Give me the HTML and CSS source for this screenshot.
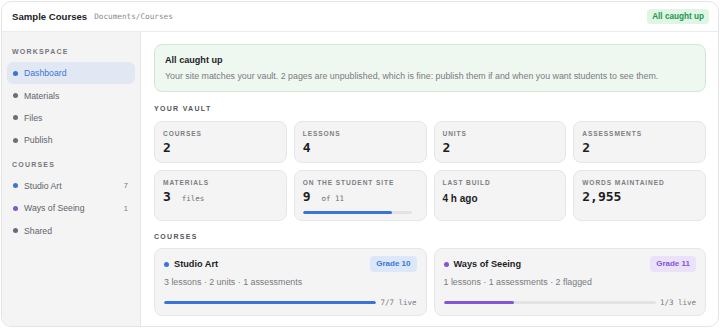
FILE: index.html
```html
<!DOCTYPE html>
<html lang="en">
<head>
    <meta charset="UTF-8">
    <meta name="viewport" content="width=device-width, initial-scale=1.0">
    <title>Sample Courses</title>
    <link rel="stylesheet" href="styles.css">
</head>
<body>
    <div class="app">
        <div class="topbar">
            <div class="brand">Sample Courses</div>
            <div class="path">Documents/Courses</div>
            <div class="status-pill">All caught up</div>
        </div>
        <div class="layout">
            <div class="sidebar">
                <div class="side-title">Workspace</div>
                <div class="nav-item active"><span class="dot blue"></span>Dashboard</div>
                <div class="nav-item"><span class="dot"></span>Materials</div>
                <div class="nav-item"><span class="dot"></span>Files</div>
                <div class="nav-item"><span class="dot"></span>Publish</div>
                <div class="side-title">Courses</div>
                <div class="nav-item"><span class="dot blue"></span>Studio Art<span class="count">7</span></div>
                <div class="nav-item"><span class="dot purple"></span>Ways of Seeing<span class="count">1</span></div>
                <div class="nav-item"><span class="dot slate"></span>Shared</div>
            </div>
            <div class="main">
                <div class="notice">
                    <div class="notice-title">All caught up</div>
                    <div class="notice-text">Your site matches your vault. 2 pages are unpublished, which is fine: publish them if and when you want students to see them.</div>
                </div>

                <div class="section-title">Your vault</div>
                <div class="stats">
                    <div class="stat">
                        <div class="stat-label">Courses</div>
                        <div class="stat-value">2</div>
                    </div>
                    <div class="stat">
                        <div class="stat-label">Lessons</div>
                        <div class="stat-value">4</div>
                    </div>
                    <div class="stat">
                        <div class="stat-label">Units</div>
                        <div class="stat-value">2</div>
                    </div>
                    <div class="stat">
                        <div class="stat-label">Assessments</div>
                        <div class="stat-value">2</div>
                    </div>
                    <div class="stat">
                        <div class="stat-label">Materials</div>
                        <div class="stat-value">3 <span class="stat-unit">files</span></div>
                    </div>
                    <div class="stat">
                        <div class="stat-label">On the student site</div>
                        <div class="stat-value">9 <span class="stat-unit">of 11</span></div>
                        <div class="bar small"><div class="bar-fill blue" style="width: 82%"></div></div>
                    </div>
                    <div class="stat">
                        <div class="stat-label">Last build</div>
                        <div class="stat-value sans">4 h ago</div>
                    </div>
                    <div class="stat">
                        <div class="stat-label">Words maintained</div>
                        <div class="stat-value">2,955</div>
                    </div>
                </div>

                <div class="section-title">Courses</div>
                <div class="courses">
                    <div class="course">
                        <div class="course-head">
                            <span class="dot blue"></span>
                            <span class="course-name">Studio Art</span>
                            <span class="grade blue-tag">Grade 10</span>
                        </div>
                        <div class="course-meta">3 lessons · 2 units · 1 assessments</div>
                        <div class="course-progress">
                            <div class="bar"><div class="bar-fill blue" style="width: 100%"></div></div>
                            <span class="live">7/7 live</span>
                        </div>
                    </div>
                    <div class="course">
                        <div class="course-head">
                            <span class="dot purple"></span>
                            <span class="course-name">Ways of Seeing</span>
                            <span class="grade purple-tag">Grade 11</span>
                        </div>
                        <div class="course-meta">1 lessons · 1 assessments · 2 flagged</div>
                        <div class="course-progress">
                            <div class="bar"><div class="bar-fill purple" style="width: 33%"></div></div>
                            <span class="live">1/3 live</span>
                        </div>
                    </div>
                </div>
            </div>
        </div>
    </div>
</body>
</html>
```

FILE: styles.css
```css
body {
    margin: 0;
    padding: 1px 1px 0 1px;
    background-color: #ffffff;
    font-family: "Liberation Sans", Arial, sans-serif;
    color: #1d1d1f;
}
.app {
    height: 324px;
    border: 1px solid #e4e4e6;
    border-radius: 10px;
    overflow: hidden;
    display: flex;
    flex-direction: column;
    background-color: #fff;
}
.topbar {
    height: 29px;
    flex: none;
    display: flex;
    align-items: center;
    padding: 0 9px 0 10px;
    border-bottom: 1px solid #ececee;
}
.brand {
    font-weight: bold;
    font-size: 9.6px;
}
.path {
    margin-left: 7px;
    font-family: "DejaVu Sans Mono", monospace;
    font-size: 7.7px;
    color: #8a8a8e;
}
.status-pill {
    margin-left: auto;
    background-color: #dff5e5;
    color: #23954b;
    font-weight: bold;
    font-size: 8.2px;
    line-height: 15px;
    padding: 0 5px;
    border-radius: 4px;
}
.layout {
    flex: 1;
    display: flex;
    min-height: 0;
}
.sidebar {
    width: 139px;
    flex: none;
    background-color: #f4f4f5;
    border-right: 1px solid #e6e6e8;
    padding: 15px 5px 0 5px;
    box-sizing: border-box;
}
.side-title {
    font-size: 7px;
    line-height: 9px;
    font-weight: bold;
    letter-spacing: 1.2px;
    text-transform: uppercase;
    color: #76767b;
    padding: 0 5px;
    margin-bottom: 6px;
}
.nav-item + .side-title {
    margin-top: 8px;
}
.nav-item {
    display: flex;
    align-items: center;
    height: 22.4px;
    padding: 0 7px 0 6px;
    font-size: 8.7px;
    color: #636368;
    border-radius: 6px;
}
.nav-item.active {
    background-color: #e2e8f3;
    color: #3b74d9;
}
.nav-item .dot {
    margin-right: 6px;
}
.count {
    margin-left: auto;
    font-size: 7.5px;
    color: #77777c;
}
.dot {
    width: 5px;
    height: 5px;
    border-radius: 50%;
    background-color: #6e6e73;
    display: inline-block;
    flex: none;
}
.dot.blue { background-color: #3b74d9; }
.dot.purple { background-color: #8356d6; }
.dot.slate { background-color: #646b7c; }

.main {
    flex: 1;
    padding: 12px 12px 0 13px;
    min-width: 0;
}
.notice {
    background-color: #eef8f1;
    border: 1px solid #cfe8d6;
    border-radius: 8px;
    padding: 9px 10px;
}
.notice-title {
    font-weight: bold;
    font-size: 9.1px;
    line-height: 13px;
    margin-bottom: 3px;
}
.notice-text {
    font-size: 8.85px;
    line-height: 12px;
    color: #7a7a7f;
}
.section-title {
    font-size: 7px;
    line-height: 9px;
    font-weight: bold;
    letter-spacing: 1.3px;
    text-transform: uppercase;
    color: #55555a;
    margin: 12px 0 8px 0;
}
.stats + .section-title {
    margin: 11px 0 7px 0;
}
.stats {
    display: grid;
    grid-template-columns: repeat(4, 1fr);
    gap: 7px;
}
.stat {
    background-color: #f4f4f5;
    border: 1px solid #e6e6e8;
    border-radius: 8px;
    padding: 7px 8px 6px 8px;
}
.stat-label {
    font-size: 6.6px;
    line-height: 9px;
    font-weight: bold;
    letter-spacing: 0.9px;
    text-transform: uppercase;
    color: #7d7d82;
    margin-bottom: 2px;
}
.stat-value {
    font-family: "DejaVu Sans Mono", monospace;
    font-weight: bold;
    font-size: 13px;
    line-height: 16px;
}
.stat-value.sans {
    font-family: "Liberation Sans", Arial, sans-serif;
    font-size: 10px;
    padding-top: 2px;
}
.stat-unit {
    font-weight: normal;
    font-size: 7.5px;
    color: #6e6e73;
    margin-left: 3px;
}
.bar {
    height: 3px;
    background-color: #e3e3e6;
    border-radius: 2px;
    overflow: hidden;
}
.bar.small {
    margin-top: 4px;
    margin-right: 6px;
}
.bar-fill {
    height: 100%;
    border-radius: 2px;
}
.bar-fill.blue { background-color: #3b74d9; }
.bar-fill.purple { background-color: #8356d6; }

.courses {
    display: grid;
    grid-template-columns: 1fr 1fr;
    gap: 7px;
}
.course {
    background-color: #f4f4f5;
    border: 1px solid #e6e6e8;
    border-radius: 8px;
    padding: 7px 9px 8px 9px;
}
.course-head {
    display: flex;
    align-items: center;
    height: 16px;
}
.course-head .dot {
    margin: 0 5px 0 0;
}
.course-name {
    font-weight: bold;
    font-size: 9.2px;
}
.grade {
    margin-left: auto;
    font-size: 8px;
    line-height: 16px;
    font-weight: bold;
    padding: 0 6px;
    border-radius: 4px;
}
.blue-tag {
    background-color: #dce7fa;
    color: #3b74d9;
}
.purple-tag {
    background-color: #ebe2fa;
    color: #8356d6;
}
.course-meta {
    font-size: 8.85px;
    line-height: 12px;
    color: #7a7a7f;
    margin-top: 4px;
}
.course-progress {
    display: flex;
    align-items: center;
    gap: 4px;
    height: 10px;
    margin-top: 9px;
}
.course-progress .bar {
    flex: 1;
}
.live {
    font-family: "DejaVu Sans Mono", monospace;
    font-size: 7.5px;
    color: #7a7a7f;
}
```
